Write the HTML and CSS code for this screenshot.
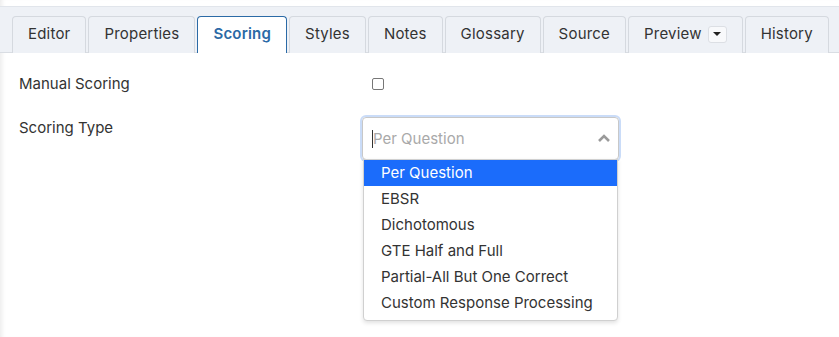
FILE: index.html
```html
<!DOCTYPE html>
<html lang="en">

<head>
    <meta charset="UTF-8">
    <meta name="viewport" content="width=device-width, initial-scale=1.0">
    <title>Scoring</title>
    <link rel="stylesheet" href="styles.css">
</head>

<body>
    <div class="page">
        <ul class="tabs">
            <li class="tab">Editor</li>
            <li class="tab">Properties</li>
            <li class="tab active">Scoring</li>
            <li class="tab">Styles</li>
            <li class="tab">Notes</li>
            <li class="tab">Glossary</li>
            <li class="tab">Source</li>
            <li class="tab">Preview <span class="drop-btn"><span class="caret"></span></span></li>
            <li class="tab">History</li>
        </ul>

        <div class="form">
            <div class="row">
                <label class="label">Manual Scoring</label>
                <div class="control"><span class="checkbox"></span></div>
            </div>
            <div class="row">
                <label class="label">Scoring Type</label>
                <div class="control">
                    <div class="select">
                        <div class="select-input">
                            <span class="cursor"></span>
                            <span class="placeholder">Per Question</span>
                            <svg class="chevron" width="14" height="10" viewBox="0 0 14 10">
                                <path d="M2 8 L7 3 L12 8" fill="none" stroke="#9a9a9a" stroke-width="2.6" />
                            </svg>
                        </div>
                        <ul class="menu">
                            <li class="option selected">Per Question</li>
                            <li class="option">EBSR</li>
                            <li class="option">Dichotomous</li>
                            <li class="option">GTE Half and Full</li>
                            <li class="option">Partial-All But One Correct</li>
                            <li class="option">Custom Response Processing</li>
                        </ul>
                    </div>
                </div>
            </div>
        </div>
    </div>
</body>

</html>
```

FILE: styles.css
```css
* {
    margin: 0;
    padding: 0;
    list-style: none;
    box-sizing: border-box;
    font-family: Inter, "Noto Sans", sans-serif;
}

body {
    background: #fff;
    color: #333;
}

.page {
    height: 337px;
    padding-top: 6px;
    box-shadow: inset 5px 0 4px -3px #ececec;
}

/* tabs ----------------------------------------------- */

.tabs {
    display: flex;
    gap: 2px;
    height: 47px;
    padding: 9px 12px 0;
    background: #eef1f6;
    border-top: 1px solid #e1e5eb;
    border-bottom: 1px solid #d9dde3;
}

.tab {
    display: flex;
    align-items: center;
    justify-content: center;
    height: 37px;
    padding: 0 15px 3px;
    border: 1px solid #d5d9df;
    border-bottom: none;
    border-radius: 4px 4px 0 0;
    background: #eef1f6;
    font-size: 15px;
    letter-spacing: 0.2px;
    color: #333;
}

.tab.active {
    background: #fff;
    border-color: #2b6aa6;
    color: #2b6aa6;
    font-weight: 600;
}

.drop-btn {
    display: inline-flex;
    align-items: center;
    justify-content: center;
    width: 19px;
    height: 17px;
    margin-left: 6px;
    margin-top: 1px;
    border: 1px solid #dcdfe4;
    border-radius: 3px;
    background: #f8f9fb;
}

.caret {
    width: 0;
    height: 0;
    border-left: 4px solid transparent;
    border-right: 4px solid transparent;
    border-top: 4px solid #222;
}

/* form ----------------------------------------------- */

.form {
    padding: 17px 0 0 19px;
}

.row {
    display: grid;
    grid-template-columns: 343px 257px;
}

.row+.row {
    margin-top: 19px;
}

.label {
    font-size: 15px;
    color: #333;
    line-height: 28px;
}

.row+.row .label {
    line-height: 22px;
}

.control {
    display: flex;
    align-items: center;
}

.checkbox {
    width: 12px;
    height: 12px;
    margin-left: 10px;
    border: 1px solid #777;
    border-radius: 2px;
}

.select {
    position: relative;
    width: 257px;
}

.select-input {
    display: flex;
    align-items: center;
    height: 43px;
    padding: 0 7px 0 9px;
    border: 1px solid #c8c8c8;
    border-radius: 4px;
    box-shadow: 0 0 0 2px #cadcf8;
}

.cursor {
    width: 1px;
    height: 18px;
    background: #333;
}

.placeholder {
    flex: 1;
    font-size: 15px;
    color: #a9a9a9;
}

.chevron {
    margin-bottom: 1px;
}

.menu {
    position: absolute;
    top: 42px;
    left: 1px;
    right: 1px;
    padding-bottom: 4px;
    background: #fff;
    border: 1px solid #d0d0d0;
    border-radius: 0 0 4px 4px;
    box-shadow: 0 2px 4px rgba(0, 0, 0, 0.12);
}

.option {
    height: 26px;
    line-height: 26px;
    padding-left: 17px;
    font-size: 15px;
    color: #333;
}

.option.selected {
    background: #1b6cfb;
    color: #fff;
}
```
